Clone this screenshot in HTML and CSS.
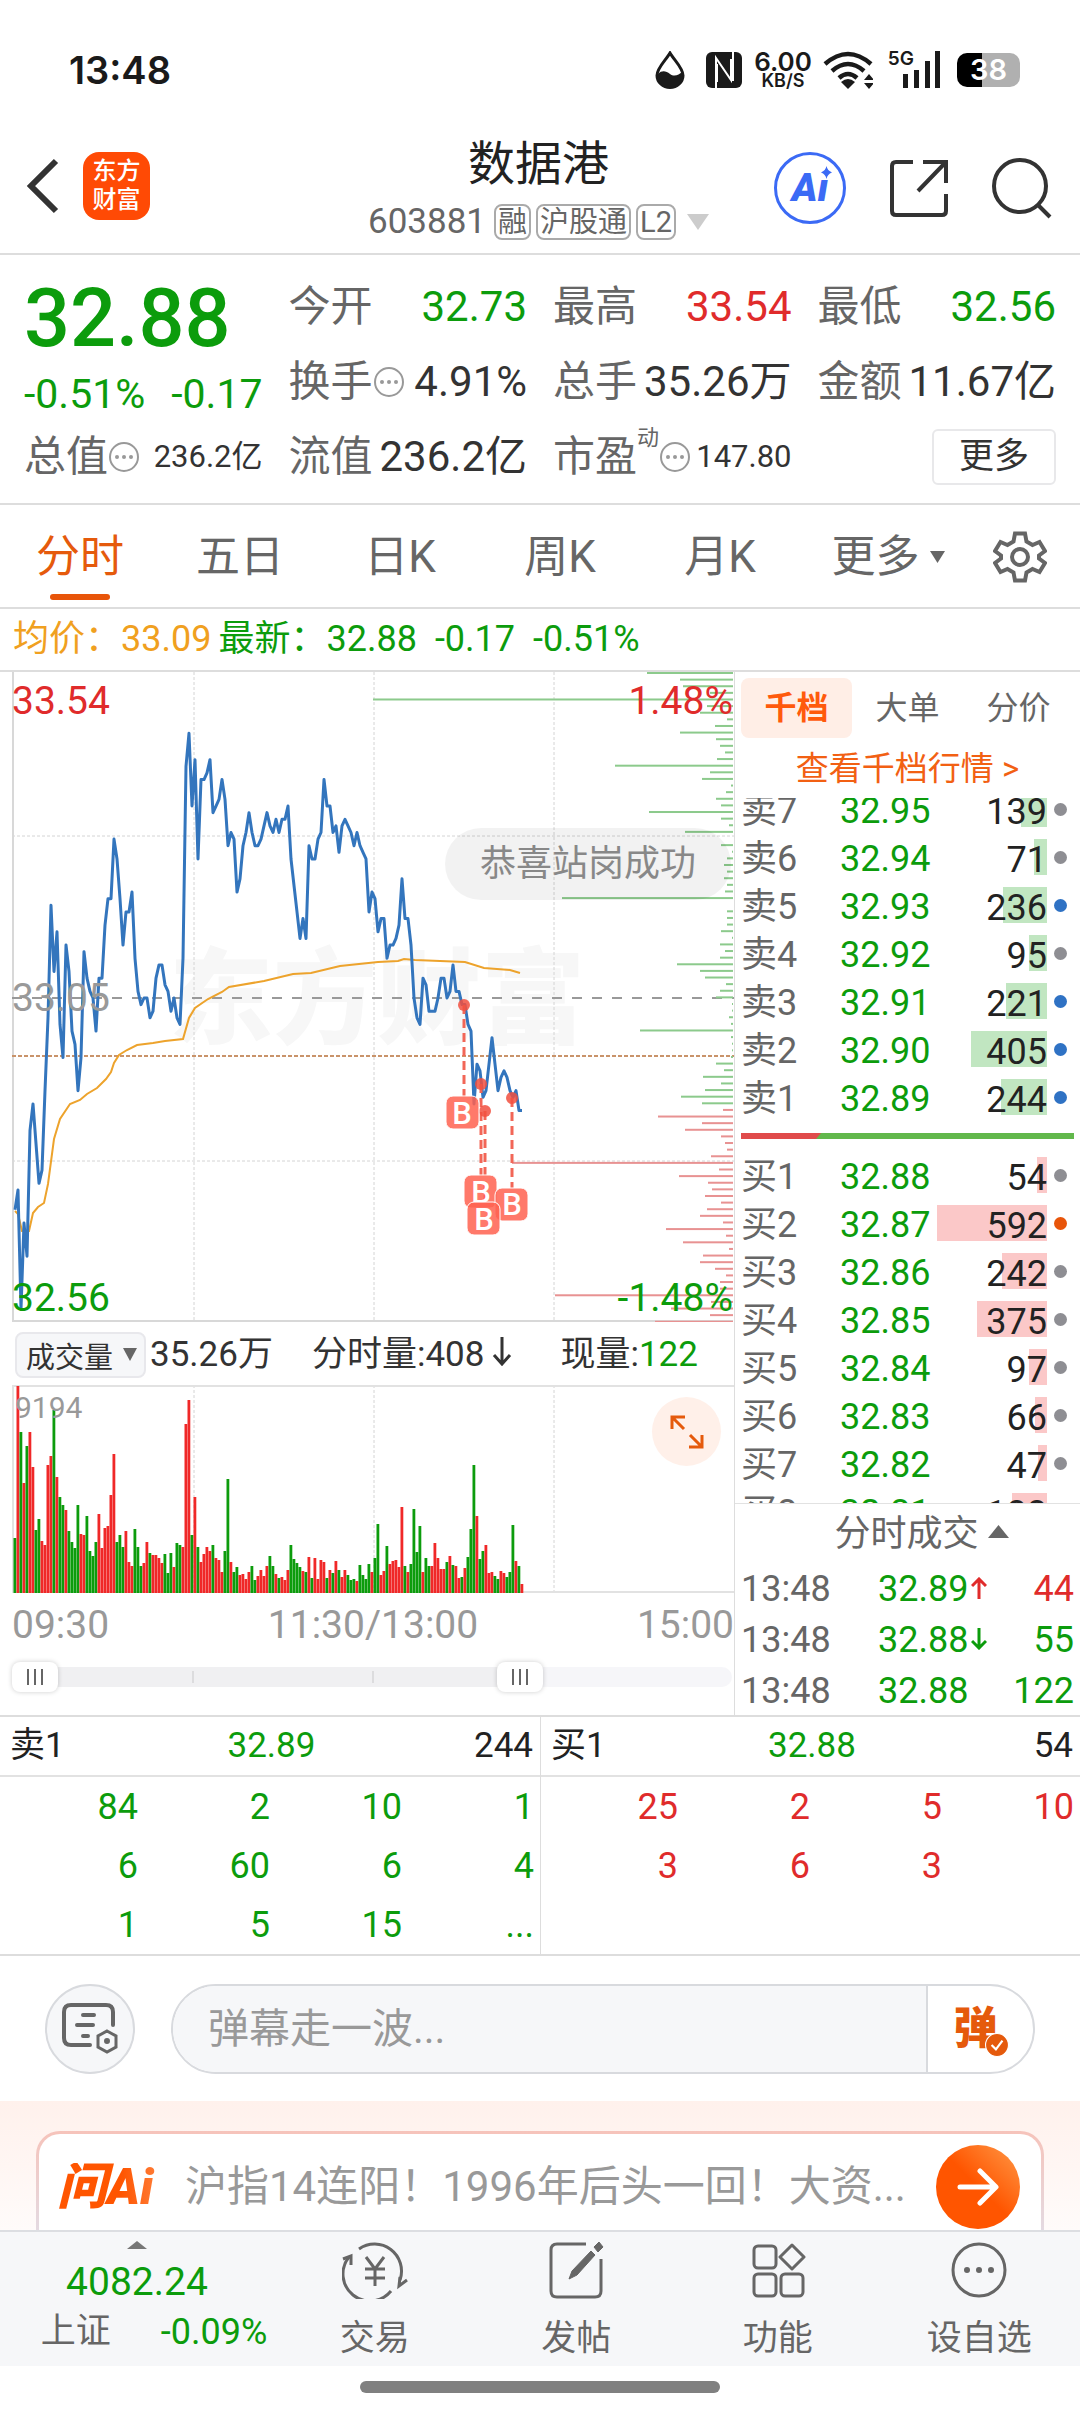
FILE: index.html
```html
<!DOCTYPE html>
<html lang="zh-CN">
<head>
  <meta charset="UTF-8">
  <meta name="viewport" content="width=device-width, initial-scale=1.0">
  <title>数据港 603881</title>
  <link rel="stylesheet" href="styles.css">
</head>
<body>
  <div class="status-bar">
    <span class="clock">13:48</span>
    <div class="status-icons">
      <svg width="30" height="38" viewBox="0 0 30 38"><path d="M15 2C11 9 2 17 2 24.500a13 12 0 0 0 26 0C28 17 19 9 15 2Z" fill="none" stroke="#1a1a1a" stroke-width="3"/><path d="M3 23c4-4 8-3 12 0s9 1 12-2c3 10-4 16-12 16S2 31 3 23Z" fill="#1a1a1a"/></svg>
      <svg class="nfc" width="36" height="36" viewBox="0 0 36 36"><rect width="36" height="36" rx="6" fill="#1a1a1a"/><path d="M10 36V6l15 22V7M27 0v29M11 12v18" fill="none" stroke="#fff" stroke-width="2"/></svg>
      <span class="net-speed"><b>6.00</b><i>KB/S</i></span>
      <svg width="50" height="38" viewBox="0 0 50 38"><g fill="none" stroke="#1a1a1a" stroke-width="4.500"><path d="M2 13Q25-7 48 13"/><path d="M9 20Q25 6 41 20"/><path d="M16 27Q25 19 34 27"/></g><path d="M18 31q7-6 14 0l-7 7Z" fill="#1a1a1a"/><path d="M41 29l5-6 5 6ZM41 32l5 6 5-6Z" fill="#1a1a1a"/></svg>
      <span class="signal">
        <small>5G</small>
        <svg width="40" height="38" viewBox="0 0 40 38" fill="#1a1a1a"><rect x="2" y="23" width="5" height="14"/><rect x="13" y="19" width="5" height="18"/><rect x="24" y="10" width="5" height="27"/><rect x="34" y="0" width="5" height="37"/></svg>
      </span>
      <span class="battery">38</span>
    </div>
  </div>

  <header class="header">
    <div class="header-left">
      <button class="icon-btn" aria-label="返回"><svg width="34" height="56" viewBox="0 0 34 56"><path d="M31 3 6 28l25 25" fill="none" stroke="#333" stroke-width="6"/></svg></button>
      <a class="app-logo" href="#">东方<br>财富</a>
    </div>
    <div class="stock">
      <h1>数据港</h1>
      <div class="stock-meta">
        <span class="code">603881</span>
        <span class="tag">融</span>
        <span class="tag">沪股通</span>
        <span class="tag">L2</span>
        <svg class="caret" width="22" height="16" viewBox="0 0 22 16"><path d="M0 0h22L11 16Z" fill="#ccc"/></svg>
      </div>
    </div>
    <div class="header-right">
      <button class="ai-btn" aria-label="Ai"><span>Aı</span><svg width="11" height="13" viewBox="0 0 12 14"><path d="M6 0q1 5 6 7-5 2-6 7-1-5-6-7 5-2 6-7Z" fill="#3b6af5"/></svg></button>
      <button class="icon-btn" aria-label="分享"><svg width="60" height="60" viewBox="0 0 60 60" fill="none" stroke="#333" stroke-width="4"><path d="M24 4H7q-4 0-4 4v45q0 4 4 4h46q4 0 4-4V36"/><path d="M34 4h23v21M56 5 29 33"/></svg></button>
      <button class="icon-btn" aria-label="搜索"><svg width="60" height="62" viewBox="0 0 60 62" fill="none" stroke="#333" stroke-width="4"><circle cx="28" cy="29" r="26"/><path d="m46 48 12 12"/></svg></button>
    </div>
  </header>

  <section class="quote">
    <div class="price-block">
      <strong class="price">32.88</strong>
      <div class="change"><span>-0.51%</span><span>-0.17</span></div>
    </div>
    <div class="cell"><span>今开</span><b class="down">32.73</b></div>
    <div class="cell"><span>最高</span><b class="up">33.54</b></div>
    <div class="cell"><span>最低</span><b class="down">32.56</b></div>
    <div class="cell"><span>换手<svg class="more-dot" viewBox="0 0 32 32"><use href="#dots"/></svg></span><b>4.91%</b></div>
    <div class="cell"><span>总手</span><b>35.26万</b></div>
    <div class="cell"><span>金额</span><b>11.67亿</b></div>
    <div class="cell"><span>总值<svg class="more-dot" viewBox="0 0 32 32"><use href="#dots"/></svg></span><b class="small">236.2亿</b></div>
    <div class="cell"><span>流值</span><b>236.2亿</b></div>
    <div class="cell"><span>市盈<sup>动</sup><svg class="more-dot" viewBox="0 0 32 32"><use href="#dots"/></svg></span><b class="small">147.80</b></div>
    <div class="cell"><button class="more-btn">更多</button></div>
  </section>

  <nav class="tabs">
    <button class="active">分时</button>
    <button>五日</button>
    <button>日K</button>
    <button>周K</button>
    <button>月K</button>
    <button class="tab-more">更多<svg width="15" height="12" viewBox="0 0 15 12"><path d="M0 0h15L7.500 12Z" fill="#666"/></svg></button>
    <button class="tab-gear" aria-label="设置"><svg width="54" height="54" viewBox="0 0 54 54" fill="none" stroke="#666" stroke-width="4"><path d="M22 3.500h10l1.500 8 6 3.500 7-3 5.500 9-6 4.500v3l6 4.500-5.500 9-7-3-6 3.500-1.500 8H22l-1.500-8-6-3.500-7 3L2 33l6-4.500v-3L2 21l5.500-9 7 3 6-3.500Z"/><circle cx="27" cy="27" r="8"/></svg></button>
  </nav>

  <div class="info-line">
    <span class="avg">均价：33.09</span>
    <span class="last">最新：32.88</span>
    <span class="last">-0.17</span>
    <span class="last">-0.51%</span>
  </div>

  <main class="board">
    <div class="charts">
      <div class="chart">
        <svg id="price-chart" viewBox="0 0 722 650">
          <text class="watermark" x="365" y="364" text-anchor="middle">东方财富</text>
          <g class="grid">
            <path d="M182 0v650M362 0v650M542 0v650M0 164h722M0 489h722"/>
          </g>
          <path class="axis" d="M1 0v649h720"/>
          <path class="mid" d="M0 326h722"/>
          <path class="now" d="M0 384h722"/>
          <g id="depth"></g>
          <polyline class="avg-line" points="3,539 6,542 10,559 17,559 21,541 26,535 32,531 36,512 42,467 48,447 58,432 68,428 75,422 85,416 94,407 99,400 102,391 107,383 115,378 125,373 141,371 153,369 171,367 177,346 183,336 196,327 210,320 217,315 252,309 281,302 299,301 328,294 366,290 386,289 392,287 403,288 453,290 472,296 498,298 508,301"/>
          <polyline id="price-line" class="price-line"/>
          <g class="stems"><path d="M452 333v92M469 412v92M473 439v92M500 426v90"/></g>
          <g class="buy-dots"><circle cx="452" cy="333" r="6"/><circle cx="469" cy="412" r="6"/><circle cx="473" cy="439" r="6"/><circle cx="500" cy="426" r="6"/></g>
          <g class="buys">
            <rect x="434" y="424" width="33" height="33" rx="7"/><text x="450" y="452">B</text>
            <rect x="452" y="503" width="33" height="33" rx="7"/><text x="469" y="531">B</text>
            <rect x="483" y="516" width="33" height="33" rx="7"/><text x="500" y="543">B</text>
            <rect x="455" y="530" width="33" height="33" rx="7"/><text x="472" y="558">B</text>
          </g>
        </svg>
        <span class="label top-left up">33.54</span>
        <span class="label top-right up">1.48%</span>
        <span class="label mid-left">33.05</span>
        <span class="label bottom-left down">32.56</span>
        <span class="label bottom-right down">-1.48%</span>
        <span class="bullet">恭喜站岗成功</span>
      </div>

      <div class="volume-head">
        <span class="select-wrap">
          <select aria-label="指标"><option>成交量</option></select>
          <svg width="14" height="13" viewBox="0 0 14 13"><path d="M0 0h14L7 13Z" fill="#666"/></svg>
        </span>
        <span class="total">35.26万</span>
        <span class="minute">分时量:408<svg width="20" height="30" viewBox="0 0 20 30"><path d="M10 1v26M2 19l8 9 8-9" fill="none" stroke="#333" stroke-width="3"/></svg></span>
        <span>现量:<b class="down">122</b></span>
      </div>

      <div class="volume">
        <svg viewBox="0 0 722 208">
          <g class="grid"><path d="M182 0v208M362 0v208M542 0v208"/></g>
          <path class="axis-light" d="M0 1h722M1 0v208M0 207h722"/>
          <g id="volume-bars"></g>
        </svg>
        <span class="volume-max">9194</span>
        <button class="expand" aria-label="展开"><svg width="34" height="34" viewBox="0 0 34 34" fill="none" stroke="#e55a0c" stroke-width="3"><path d="M2 14V2h13M2 2l12 12M32 20v12H19M32 32 20 20"/></svg></button>
      </div>

      <div class="times"><span>09:30</span><span>11:30/13:00</span><span>15:00</span></div>

      <div class="range">
        <div class="range-track"><span></span><span></span></div>
        <input type="range" min="0" max="241" value="0" aria-label="开始时间">
        <input type="range" min="0" max="241" value="173" aria-label="结束时间">
      </div>
    </div>

    <aside class="side">
      <div class="side-tabs">
        <button class="active">千档</button>
        <button>大单</button>
        <button>分价</button>
      </div>
      <a class="book-link" href="#">查看千档行情 &gt;</a>
      <div class="book-view">
        <table class="book" id="sells"></table>
        <div class="ratio"><svg viewBox="0 0 333 6" preserveAspectRatio="none"><path d="M0 0h333v6H0Z" fill="#62b84c"/><path d="M0 0h80l-5 6H0Z" fill="#e04b4b"/></svg></div>
        <table class="book" id="buys"></table>
      </div>
      <button class="trades-head">分时成交<svg width="21" height="13" viewBox="0 0 21 13"><path d="M0 13h21L10.500 0Z" fill="#666"/></svg></button>
      <table class="trades">
        <tr><td>13:48</td><td class="down">32.89<svg class="up" viewBox="0 0 16 22"><path d="M8 22V3M1 9l7-7 7 7"/></svg></td><td class="up">44</td></tr>
        <tr><td>13:48</td><td class="down">32.88<svg class="down" viewBox="0 0 16 22"><path d="M8 0v19M1 13l7 7 7-7"/></svg></td><td class="down">55</td></tr>
        <tr><td>13:48</td><td class="down">32.88</td><td class="down">122</td></tr>
      </table>
    </aside>
  </main>

  <section class="queues">
    <div class="queue">
      <div class="queue-head"><span>卖1</span><b>32.89</b><span>244</span></div>
      <table class="down">
        <tr><td>84</td><td>2</td><td>10</td><td>1</td></tr>
        <tr><td>6</td><td>60</td><td>6</td><td>4</td></tr>
        <tr><td>1</td><td>5</td><td>15</td><td>...</td></tr>
      </table>
    </div>
    <div class="queue">
      <div class="queue-head"><span>买1</span><b>32.88</b><span>54</span></div>
      <table class="up">
        <tr><td>25</td><td>2</td><td>5</td><td>10</td></tr>
        <tr><td>3</td><td>6</td><td>3</td><td></td></tr>
      </table>
    </div>
  </section>

  <section class="danmu">
    <button class="danmu-set" aria-label="弹幕设置"><svg width="56" height="52" viewBox="0 0 56 52" fill="none" stroke="#666" stroke-width="4" stroke-linecap="round"><path d="M51 22V9q0-7-7-7H9Q2 2 2 9v26q0 7 7 7h19"/><path d="M21 12h11M15 22h16M21 33h5"/><path d="m45 28 9 5v11l-9 5-9-5V33Z" stroke-width="3"/><circle cx="45" cy="38" r="2" fill="#666" stroke-width="2"/></svg></button>
    <div class="danmu-box">
      <input type="text" placeholder="弹幕走一波..." aria-label="弹幕">
      <button aria-label="发送弹幕">弹<svg width="24" height="24" viewBox="0 0 22 22"><circle cx="11" cy="11" r="10.500" fill="#e55a0c" stroke="#fff"/><path d="m6 11 4 4 6-8" fill="none" stroke="#fff" stroke-width="2"/></svg></button>
    </div>
  </section>

  <section class="ask">
    <div class="ask-card">
      <span class="ask-logo">问Ai</span>
      <a href="#">沪指14连阳！1996年后头一回！大资...</a>
      <button aria-label="提问"><svg width="42" height="38" viewBox="0 0 42 38" fill="none" stroke="#fff" stroke-width="5" stroke-linecap="round" stroke-linejoin="round"><path d="M3 19h35M23 3l16 16-16 16"/></svg></button>
    </div>
  </section>

  <nav class="bottom-nav">
    <a class="index" href="#">
      <svg width="20" height="8" viewBox="0 0 20 8"><path d="M0 8h20L10 0Z" fill="#777"/></svg>
      <b>4082.24</b>
      <span class="index-row"><span>上证</span><em>-0.09%</em></span>
    </a>
    <a href="#"><svg width="66" height="58" viewBox="0 0 66 58" fill="none" stroke="#666" stroke-width="3"><path d="M17 8A27 27 0 0 1 58 39M49 50A27 27 0 0 1 7 16"/><path d="M1 18l8-3v9M65 39l-8 6 1-9"/><path d="m24 16 9 12 9-12M33 28v17M23 28h20M23 37h20"/></svg>交易</a>
    <a href="#"><svg width="56" height="58" viewBox="0 0 56 58" fill="none" stroke="#666" stroke-width="3"><path d="M38 3H9Q3 3 3 9v41q0 6 6 6h38q6 0 6-6V18"/><path d="m46 6 5-5 4 5-5 5ZM43 10l4 4-18 20-8 4 3-8Z" fill="#666" stroke-width="1"/></svg>发帖</a>
    <a href="#"><svg width="56" height="58" viewBox="0 0 56 58" fill="none" stroke="#666" stroke-width="3"><rect x="4" y="5" width="22" height="22" rx="4"/><rect x="4" y="33" width="22" height="22" rx="4"/><rect x="31" y="33" width="22" height="22" rx="4"/><path d="M42 4l12 12-12 12-12-12Z" stroke-linejoin="round"/></svg>功能</a>
    <a href="#"><svg width="58" height="58" viewBox="0 0 58 58"><circle cx="29" cy="29" r="26" fill="none" stroke="#666" stroke-width="3"/><g fill="#666"><circle cx="17" cy="29" r="3"/><circle cx="29" cy="29" r="3"/><circle cx="41" cy="29" r="3"/></g></svg>设自选</a>
  </nav>
  <div class="home-indicator"></div>

  <svg class="defs" aria-hidden="true">
    <symbol id="dots" viewBox="0 0 32 32"><circle cx="16" cy="16" r="14" fill="none" stroke="#999" stroke-width="2"/><g fill="#999"><circle cx="9" cy="16" r="2"/><circle cx="16" cy="16" r="2"/><circle cx="23" cy="16" r="2"/></g></symbol>
  </svg>
  <script src="script.js"></script>
</body>
</html>
```

FILE: styles.css
```css
* {
  box-sizing: border-box;
}
body {
  margin: 0;
  background: #fff;
  color: #333;
  font-family: Roboto, "Noto Sans CJK SC", sans-serif;
  font-size: 36px;
  line-height: 48px;
}
button, input, select {
  margin: 0;
  padding: 0;
  border: 0;
  background: none;
  color: inherit;
  font: inherit;
  cursor: pointer;
}
a {
  color: inherit;
  text-decoration: none;
}
b {
  font-weight: 400;
}
svg {
  flex-shrink: 0;
}
table {
  width: 100%;
  border-collapse: collapse;
  table-layout: fixed;
}
td {
  padding: 0;
}
.up {
  color: #e02b2b;
}
.down {
  color: #0c9c0c;
}
.defs {
  display: none;
}

/* status bar */
.status-bar {
  display: flex;
  justify-content: space-between;
  align-items: center;
  padding: 46px 60px 31px 69px;
  font-family: Inter, sans-serif;
  color: #1a1a1a;
}
.clock {
  font-size: 38px;
  font-weight: 600;
}
.status-icons {
  display: flex;
  align-items: center;
}
.nfc {
  margin: 0 12px 0 21px;
}
.net-speed {
  display: flex;
  flex-direction: column;
  align-items: center;
  margin-right: 11px;
}
.net-speed b {
  font-size: 26px;
  font-weight: 600;
  line-height: 22px;
}
.net-speed i {
  font-size: 18px;
  font-style: normal;
  font-weight: 600;
  line-height: 16px;
}
.signal {
  display: flex;
  margin: 0 16px 0 15px;
}
.signal small {
  margin-right: -13px;
  font-size: 19px;
  font-weight: 600;
  line-height: 16px;
}
.battery {
  width: 63px;
  border-radius: 10px;
  background: linear-gradient(to right, #000 40%, #b0b0b0 40%);
  color: #fff;
  font-size: 29px;
  font-weight: 600;
  line-height: 34px;
  text-align: center;
}

/* header */
.header {
  display: grid;
  grid-template-columns: 1fr auto 1fr;
  align-items: start;
  padding: 10px 28px 13px 25px;
  border-bottom: 2px solid #ddd;
}
.header-left, .header-right {
  display: flex;
  align-items: center;
  padding-top: 17px;
}
.header-left {
  gap: 24px;
}
.header-right {
  justify-content: flex-end;
  gap: 43px;
}
.icon-btn {
  display: flex;
}
.app-logo {
  width: 67px;
  padding: 5px 0;
  border-radius: 16px;
  background: #ff4a05;
  color: #fff;
  font-size: 24px;
  font-weight: 500;
  line-height: 29px;
  text-align: center;
}
.stock h1 {
  margin: 0 0 11px;
  font-size: 47px;
  font-weight: 400;
  line-height: 58px;
  text-align: center;
  color: #222;
}
.stock-meta {
  display: flex;
  align-items: center;
  gap: 5px;
  color: #666;
}
.code {
  margin-right: 3px;
  font-size: 35px;
  line-height: 36px;
}
.tag {
  padding: 0 2px;
  border: 2px solid #aaa;
  border-radius: 8px;
  font-size: 29px;
  line-height: 32px;
}
.caret {
  margin-left: 6px;
}
.ai-btn {
  position: relative;
  width: 72px;
  height: 72px;
  border: 3px solid #3b6af5;
  border-radius: 50%;
  color: #3b6af5;
  font-size: 39px;
  font-style: italic;
  font-weight: 900;
  line-height: 66px;
}
.ai-btn svg {
  position: absolute;
  top: 11px;
  right: 11px;
}

/* quote */
.quote {
  display: grid;
  grid-template-columns: repeat(4, 1fr);
  column-gap: 26px;
  padding: 14px 24px 9px;
  border-bottom: 2px solid #ddd;
  font-size: 42px;
  line-height: 74px;
}
.price-block {
  grid-row: span 2;
  color: #0c9c0c;
}
.price {
  display: block;
  font-size: 81px;
  font-weight: 500;
  line-height: 100px;
}
.change {
  display: flex;
  justify-content: space-between;
  font-size: 41px;
  line-height: 50px;
}
.cell {
  display: flex;
  justify-content: space-between;
  align-items: center;
  height: 75px;
  white-space: nowrap;
}
.cell > span {
  display: flex;
  align-items: center;
  color: #666;
}
.cell .small {
  font-size: 31px;
}
.cell sup {
  align-self: flex-start;
  font-size: 22px;
  line-height: 36px;
}
.more-dot {
  width: 32px;
  height: 32px;
}
.more-btn {
  width: 124px;
  margin-left: auto;
  border: 2px solid #e8e8ea;
  border-radius: 6px;
  font-size: 35px;
  line-height: 52px;
}

/* period tabs */
.tabs {
  display: grid;
  grid-template-columns: repeat(6, 4fr) 3fr;
  border-bottom: 2px solid #ddd;
}
.tabs button {
  position: relative;
  padding-top: 2px;
  color: #666;
  font-size: 44px;
  line-height: 100px;
}
.tabs .active {
  color: #e55a0c;
}
.tabs .active::after {
  content: "";
  position: absolute;
  right: 50px;
  bottom: 7px;
  left: 50px;
  height: 6px;
  border-radius: 3px;
  background: #e8550a;
}
.tabs .tab-more, .tabs .tab-gear {
  display: flex;
  align-items: center;
  justify-content: center;
}
.tabs .tab-more {
  gap: 10px;
  padding-left: 16px;
}

.info-line {
  display: flex;
  padding: 0 13px;
  border-bottom: 2px solid #ddd;
  line-height: 61px;
}
.avg {
  margin-right: 7px;
  color: #f0a020;
}
.last {
  margin-right: 18px;
  color: #0c9c0c;
}

/* board */
.board {
  display: grid;
  grid-template-columns: 1fr 346px;
  border-bottom: 2px solid #ddd;
}
.charts {
  padding-left: 12px;
}
.chart, .volume {
  position: relative;
}
.chart > svg, .volume > svg {
  display: block;
  width: 100%;
}
.watermark {
  fill: #f7f7f7;
  font-size: 104px;
  font-weight: 900;
}
.grid path {
  fill: none;
  stroke: #d4d4d4;
  stroke-dasharray: 3 2;
}
.axis {
  fill: none;
  stroke: #d8d8d8;
  stroke-width: 2;
}
.axis-light {
  fill: none;
  stroke: #e2e2e2;
  stroke-width: 2;
}
.mid {
  stroke: #999;
  stroke-width: 2;
  stroke-dasharray: 10 10;
}
.now {
  stroke: #c9936a;
  stroke-width: 2;
  stroke-dasharray: 4 2;
}
.avg-line {
  fill: none;
  stroke: #eda32c;
  stroke-width: 2;
}
.price-line {
  fill: none;
  stroke: #3375bd;
  stroke-width: 3;
  stroke-linejoin: round;
}
.stems path {
  stroke: #f26657;
  stroke-width: 3;
  stroke-dasharray: 9 5;
}
.buy-dots {
  fill: #f2503f;
  opacity: .85;
}
.buys rect {
  fill: #ff6250;
  fill-opacity: .85;
  stroke: #fff;
}
.buys text {
  fill: #fff;
  font-size: 31px;
  font-weight: 500;
  text-anchor: middle;
}
.label {
  position: absolute;
  font-size: 39px;
  line-height: 40px;
}
.top-left {
  top: 9px;
  left: 0;
}
.top-right {
  top: 9px;
  right: 1px;
}
.mid-left {
  top: 306px;
  left: 0;
  color: #999;
}
.bottom-left {
  bottom: 4px;
  left: 0;
}
.bottom-right {
  right: 1px;
  bottom: 4px;
}
.bullet {
  position: absolute;
  top: 156px;
  right: 3px;
  padding: 0 35px;
  border-radius: 36px;
  background: rgba(0, 0, 0, .05);
  color: #888;
  line-height: 72px;
}
.volume-head {
  display: flex;
  align-items: center;
  height: 63px;
  padding: 2px 0 0 3px;
  font-size: 35px;
}
.select-wrap {
  position: relative;
  display: flex;
  align-items: center;
  margin-right: 4px;
}
.select-wrap select {
  width: 131px;
  height: 46px;
  padding-left: 9px;
  border: 2px solid #e8e8ec;
  border-radius: 8px;
  background: #f6f7f9;
  font-size: 29px;
  appearance: none;
}
.select-wrap svg {
  position: absolute;
  right: 9px;
}
.total {
  margin-right: 39px;
}
.minute {
  margin-right: 48px;
}
.minute svg {
  margin-left: 8px;
}
.volume-max {
  position: absolute;
  top: 8px;
  left: 3px;
  color: #999;
  font-size: 30px;
  line-height: 30px;
}
.expand {
  position: absolute;
  top: 12px;
  right: 13px;
  display: flex;
  align-items: center;
  justify-content: center;
  width: 69px;
  height: 69px;
  border-radius: 50%;
  background: #fff0e9;
}
.times {
  display: flex;
  justify-content: space-between;
  color: #999;
  font-size: 39px;
  line-height: 64px;
}
.range {
  position: relative;
  height: 30px;
  margin: 5px 0 21px;
  padding: 5px 2px 0 20px;
}
.range-track {
  display: flex;
  height: 20px;
  border-radius: 10px;
  background: linear-gradient(to right, #f0f0f2 72%, #f6f6f9 72%);
}
.range-track span {
  width: 2px;
  height: 12px;
  margin: 4px 0 0 160px;
  background: #dcdcde;
}
.range-track span + span {
  margin-left: 178px;
}
.range input {
  position: absolute;
  top: 0;
  left: 0;
  width: 100%;
  height: 30px;
  appearance: none;
  pointer-events: none;
}
.range input::-webkit-slider-thumb {
  width: 46px;
  height: 30px;
  border-radius: 8px;
  background: linear-gradient(to right, #666 2px, transparent 2px, transparent 7px, #666 7px, #666 9px, transparent 9px, transparent 14px, #666 14px) center / 16px 16px no-repeat #fff;
  box-shadow: 0 0 5px rgba(0, 0, 0, .2);
  appearance: none;
  pointer-events: auto;
}

/* order book */
.side {
  border-left: 1px solid #ddd;
}
.side-tabs {
  display: flex;
  padding: 6px;
}
.side-tabs button {
  width: 111px;
  border-radius: 8px;
  color: #666;
  font-size: 32px;
  line-height: 60px;
}
.side-tabs .active {
  background: #ffeee6;
  color: #ff5a0c;
  font-weight: 700;
}
.book-link {
  display: block;
  padding-bottom: 4px;
  color: #f26013;
  font-size: 33px;
  line-height: 50px;
  text-align: center;
}
.book-view {
  height: 706px;
  overflow: hidden;
  border-bottom: 1px solid #e2e2e2;
}
#sells {
  margin-top: -13px;
}
.book td {
  height: 48px;
}
.book td:first-child {
  width: 105px;
  padding: 5px 0 0 6px;
  color: #666;
  line-height: 43px;
}
.book td:nth-child(2) {
  width: 97px;
  padding-top: 5px;
  color: #0c9c0c;
  line-height: 43px;
}
.book td:last-child {
  padding-right: 13px;
}
.qty {
  display: flex;
  align-items: center;
  justify-content: flex-end;
  gap: 7px;
  color: #222;
}
.qty-bar {
  display: flex;
  justify-content: flex-end;
  height: 36px;
  line-height: 42px;
}
#sells .qty-bar {
  background: #c1e6c1;
}
#buys .qty-bar {
  background: #fbc8c8;
}
.dot {
  width: 13px;
  height: 13px;
  border-radius: 50%;
  background: #8e8e93;
}
.dot.blue {
  background: #2f72c4;
}
.dot.orange {
  background: #e8550a;
}
.ratio {
  margin: 12px 6px;
}
.ratio svg {
  display: block;
  width: 100%;
  height: 6px;
}
.trades-head {
  display: flex;
  align-items: center;
  justify-content: center;
  gap: 9px;
  width: 100%;
  padding: 2px 0 0 28px;
  color: #666;
  font-size: 36px;
  line-height: 56px;
}
.trades-head svg {
  margin-bottom: 6px;
}
.trades td {
  height: 51px;
  padding-top: 3px;
  line-height: 48px;
}
.trades td:first-child {
  width: 143px;
  padding-left: 6px;
  color: #666;
}
.trades td:nth-child(2) {
  width: 120px;
}
.trades td:last-child {
  padding-right: 6px;
  text-align: right;
}
.trades svg {
  width: 16px;
  height: 22px;
  margin: 0 0 2px 3px;
  fill: none;
  stroke: currentColor;
  stroke-width: 3;
}

/* order queues */
.queues {
  display: grid;
  grid-template-columns: 1fr 1fr;
  border-bottom: 2px solid #ddd;
}
.queue + .queue {
  border-left: 1px solid #ddd;
}
.queue-head {
  display: grid;
  grid-template-columns: 1fr auto 1fr;
  padding: 0 7px 0 10px;
  border-bottom: 2px solid #e2e2e2;
  color: #222;
  font-size: 35px;
  line-height: 58px;
}
.queue-head b {
  color: #0c9c0c;
}
.queue-head span:last-child {
  text-align: right;
}
.queue td {
  height: 59px;
  padding: 2px 6px 0 0;
  line-height: 57px;
  text-align: right;
}
.queue td:nth-child(n+2) {
  width: 132px;
}

/* danmu input */
.danmu {
  display: flex;
  gap: 36px;
  padding: 28px 45px 27px;
}
.danmu-set {
  display: flex;
  align-items: center;
  justify-content: center;
  flex-shrink: 0;
  width: 90px;
  height: 90px;
  border: 2px solid #d8dade;
  border-radius: 50%;
  background: #f6f7f9;
}
.danmu-box {
  display: flex;
  flex: 1;
  height: 90px;
  overflow: hidden;
  border: 2px solid #d8dade;
  border-radius: 45px;
}
.danmu-box input {
  flex: 1;
  min-width: 0;
  padding-left: 35px;
  background: #f6f7f9;
  font-size: 41px;
}
.danmu-box input::placeholder {
  color: #999;
}
.danmu-box button {
  position: relative;
  width: 107px;
  padding-right: 10px;
  border-left: 2px solid #d8dade;
  color: #e55a0c;
  font-size: 44px;
  font-weight: 900;
}
.danmu-box button svg {
  position: absolute;
  right: 24px;
  bottom: 15px;
}

/* ask card */
.ask {
  height: 129px;
  overflow: hidden;
  padding: 30px 36px 0;
  background: linear-gradient(#fff1ec, #fffbfa);
}
.ask-card {
  display: flex;
  align-items: center;
  padding: 11px 21px 24px 18px;
  border: 3px solid transparent;
  border-radius: 24px;
  background: linear-gradient(#fff, #fff) padding-box, linear-gradient(#f6c3ba, #dfe0ec) border-box;
}
.ask-logo {
  width: 128px;
  background: linear-gradient(to right, #ff5500 50%, #ff9a60) text;
  color: transparent;
  font-size: 50px;
  font-style: italic;
  font-weight: 900;
}
.ask-card a {
  flex: 1;
  color: #999;
  font-size: 42px;
  white-space: nowrap;
}
.ask-card button {
  display: flex;
  align-items: center;
  justify-content: center;
  width: 84px;
  height: 84px;
  border-radius: 50%;
  background: linear-gradient(45deg, #ff5500 50%, #ff9a48);
}

/* bottom nav */
.bottom-nav {
  display: grid;
  grid-template-columns: 274px repeat(4, 1fr);
  height: 136px;
  border-top: 2px solid #dcdee2;
  background: #f6f7f9;
}
.bottom-nav a {
  display: flex;
  flex-direction: column;
  align-items: center;
  padding-top: 9px;
  color: #666;
  font-size: 35px;
  line-height: 50px;
}
.bottom-nav a svg {
  margin-bottom: 15px;
}
.bottom-nav .index svg {
  margin-bottom: 8px;
}
.index b {
  color: #0c9c0c;
  font-size: 39px;
}
.index-row {
  display: flex;
  gap: 50px;
  margin-left: 34px;
}
.index-row em {
  color: #0c9c0c;
  font-size: 36px;
  font-style: normal;
}
.home-indicator {
  width: 360px;
  height: 12px;
  margin: 15px auto 21px;
  border-radius: 6px;
  background: #808080;
}
```

FILE: script.js
```js
const UP = "#f02828";
const DOWN = "#0c9c0c";
const MINUTE = 3;
const TICK = 6.62;
const MID_Y = 326;

// price per minute, in ticks of 0.01 from the previous close
const prices = [
  -32, -29, -47, -34, -39, -20, -16, -22, -28, -26, -14, -3, 14, 4, 10, -4, -9, 8, 4, -5,
  -7, -14, -9, 7, 3, 1, 0, -5, 3, 3, 11, 15, 15, 24, 21, 15, 8, 13, 13, 16,
  6, 1, -1, 0, 0, -3, -2, 3, 5, 5, 2, 1, -2, 0, -3, -4, 6, 35, 40, 29,
  36, 21, 33, 33, 34, 36, 28, 29, 30, 33, 30, 23, 25, 24, 16, 18, 23, 25, 28, 25,
  23, 23, 24, 26, 28, 26, 25, 27, 25, 27, 27, 29, 21, 17, 13, 9, 12, 9, 23, 21,
  21, 24, 25, 33, 29, 29, 25, 26, 22, 26, 27, 26, 25, 23, 25, 23, 22, 21, 13, 16,
  15, 10, 12, 12, 6, 8, 8, 9, 11, 18, 12, 12, 8, 0, -3, -4, 3, 2, -2, -2,
  -2, 0, 3, 3, 0, 1, 5, 1, 1, -1, -1, -4, -5, -16, -10, -11, -15, -14, -10, -6,
  -10, -14, -12, -11, -12, -14, -15, -14, -17, -17
];

// bar heights, negative = falling minute
const volumes = [
  -55, 207, -161, 110, -147, 161, 126, -63, -74, 52, 48, 128, 137, -183, 116, -96, -88, 83, -62, -51,
  -45, -88, 59, 58, -77, -42, -37, -51, 79, 45, 65, 67, 98, 139, -51, -58, -46, 62, 31, 27,
  -64, -46, -27, 30, 51, -40, 38, 38, 35, 30, -39, -20, -40, 26, -50, -48, 46, 169, 193, -58,
  96, -46, 31, 39, 46, 42, -48, 35, 33, 21, -42, -114, 31, -21, -26, 18, 19, 14, 21, -27,
  -13, 17, 23, 17, 27, -37, -27, 19, -15, 16, 13, 23, -48, -34, -30, -26, 22, -21, 36, -15,
  35, 14, 33, 31, -15, 23, -20, 32, -23, 16, 23, -18, -13, -14, 12, -28, -18, -14, -29, 21,
  -35, -69, 18, 22, -47, 29, 32, 33, 26, 86, -27, 21, -29, -84, -41, -67, 21, -35, -27, 27,
  50, 35, 24, 24, -31, 37, -28, 27, 15, -16, 25, -36, -64, -128, 77, -34, -42, 48, 20, 21,
  -17, -14, 22, 20, -16, -21, -68, 32, -27, 9
];

const asks = [
  86, 53, 50, 23, 360, 26, 33, 6, 18, 53, 17, 13, 8, 16, 118, 23, 31, 2, 7, 17,
  12, 84, 12, 4, 48, 0, 12, 1, 6, 9, 6, 9, 6, 8, 171, 0, 6, 6, 6, 12,
  1, 13, 8, 13, 56, 33, 28, 7, 13, 17, 1, 1, 4, 2, 93, 2, 1, 1, 2, 17,
  9, 30, 12, 28, 52, 31
];
const bids = [
  10, 75, 31, 48, 12, 8, 6, 22, 221, 14, 54, 25, 21, 28, 12, 26, 33, 10, 67, 7,
  50, 4, 30, 33, 18, 7, 13, 13, 178, 22, 62, 23, 78
];

const sells = [
  ["卖7", "32.95", 139, ""], ["卖6", "32.94", 71, ""], ["卖5", "32.93", 236, "blue"],
  ["卖4", "32.92", 95, ""], ["卖3", "32.91", 221, "blue"], ["卖2", "32.90", 405, "blue"],
  ["卖1", "32.89", 244, "blue"]
];
const buys = [
  ["买1", "32.88", 54, ""], ["买2", "32.87", 592, "orange"], ["买3", "32.86", 242, ""],
  ["买4", "32.85", 375, ""], ["买5", "32.84", 97, ""], ["买6", "32.83", 66, ""],
  ["买7", "32.82", 47, ""], ["买8", "32.81", 188, ""]
];

document.getElementById("price-line").setAttribute("points",
  prices.map((p, i) => `${3 + i * MINUTE},${MID_Y - p * TICK}`).join(" "));

document.getElementById("volume-bars").innerHTML = volumes.map((v, i) => {
  const h = Math.abs(v);
  return `<rect x="${1.5 + i * MINUTE}" y="${208 - h}" width="2.8" height="${h}" fill="${v > 0 ? UP : DOWN}"/>`;
}).join("");

document.getElementById("depth").innerHTML = asks.concat(bids).map((w, i) =>
  `<rect x="${721 - w}" y="${i * TICK}" width="${w}" height="2" fill="${i < asks.length ? "#8cca8c" : "#e89292"}"/>`
).join("");

function renderBook(id, rows) {
  document.getElementById(id).innerHTML = rows.map(([name, price, qty, dot]) => `
    <tr>
      <td>${name}</td>
      <td>${price}</td>
      <td><div class="qty"><span class="qty-bar" style="width: ${Math.round(qty * 0.1875)}px">${qty}</span><i class="dot ${dot}"></i></div></td>
    </tr>`).join("");
}
renderBook("sells", sells);
renderBook("buys", buys);
```
